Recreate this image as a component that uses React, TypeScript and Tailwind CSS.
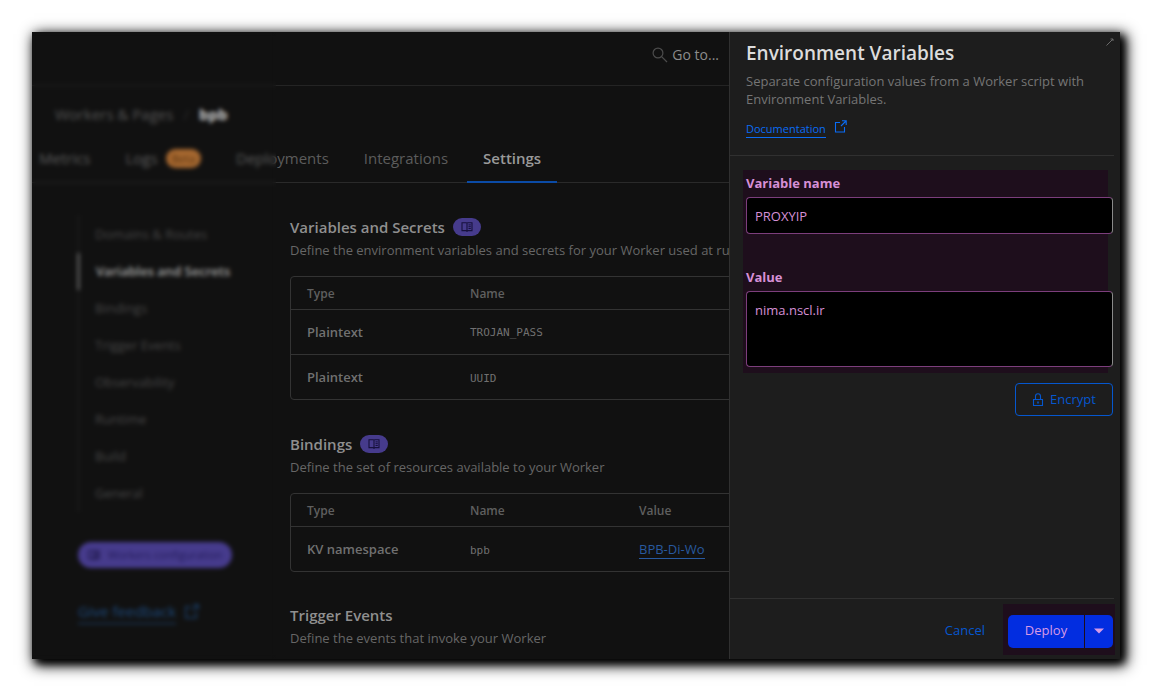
import React from "react";

const tabs = [
  { label: "Metrics" },
  { label: "Logs", badge: "Beta" },
  { label: "Deployments" },
  { label: "Integrations" },
  { label: "Settings", active: true },
];

const sections = [
  "Domains & Routes",
  "Variables and Secrets",
  "Bindings",
  "Trigger Events",
  "Observability",
  "Runtime",
  "Build",
  "General",
];

function SearchIcon() {
  return (
    <svg width="16" height="16" viewBox="0 0 16 16" fill="none" stroke="#4c4c4c" strokeWidth="1.2" aria-hidden="true">
      <circle cx="6" cy="6" r="4.9" />
      <path d="M9.6 9.6 15 15" />
    </svg>
  );
}

function ExternalIcon({ size = 13 }: { size?: number }) {
  return (
    <svg width={size} height={size} viewBox="0 0 13 13" fill="none" stroke="currentColor" strokeWidth="1.1" aria-hidden="true">
      <path d="M6 2.5H1.5V12H10.5V7" />
      <path d="M8 .8H12.2V5M12 1 7 6" />
    </svg>
  );
}

function LockIcon() {
  return (
    <svg width="12" height="14" viewBox="0 0 12 14" fill="none" stroke="currentColor" strokeWidth="1.1" aria-hidden="true">
      <path d="M1.5 6.5h9v6h-9zM3.5 6.5V3.2a2.5 2.5 0 0 1 5 0v3.3" />
      <path d="M6 8.5v2" strokeWidth="1.5" />
    </svg>
  );
}

function BookIcon() {
  return (
    <svg className="shrink-0" width="12" height="10" viewBox="0 0 12 10" fill="none" stroke="#17113d" strokeWidth="1.1" aria-hidden="true">
      <path d="M1 .8h4.2L6 1.3l.8-.5H11v7.8H6.8L6 9.4l-.8-.8H1zM6 1.3v8" />
      <path d="M7.5 2.9h2.3M7.5 4.7h2.3M7.5 6.5h2.3" strokeWidth="1" />
    </svg>
  );
}

function SectionHeading({ title, docs, text }: { title: string; docs?: boolean; text: string }) {
  return (
    <header>
      <div className="flex items-center gap-2">
        <h2 className="text-[15px] leading-6 font-semibold text-[#8f8f8f]">{title}</h2>
        {docs && (
          <a href="#docs" aria-label={`${title} documentation`} className="flex h-[18px] w-7 items-center justify-center rounded-full bg-[#463b8c]">
            <BookIcon />
          </a>
        )}
      </div>
      <p className="text-[13px] leading-[22px] text-[#666]">{text}</p>
    </header>
  );
}

function DataTable({ columns, rows }: { columns: string[]; rows: React.ReactNode[][] }) {
  return (
    <div className="mt-[15px] w-[700px] rounded border border-[#333]">
      <table className="w-full table-fixed border-collapse text-left text-[13px]">
        <colgroup>
          <col className="w-[163px]" />
          <col className="w-[169px]" />
          <col />
        </colgroup>
        <thead>
          <tr className="h-8 text-[#5f5f5f]">
            {columns.map((c) => (
              <th key={c} scope="col" className="pt-0.5 pl-4 text-xs font-semibold">
                {c}
              </th>
            ))}
          </tr>
        </thead>
        <tbody>
          {rows.map((r, i) => (
            <tr key={i} className="h-[45px] border-t border-[#333] text-[#707070]">
              {r.map((cell, j) =>
                j === 0 ? (
                  <th key={j} scope="row" className="pt-0.5 pl-4 font-semibold">
                    {cell}
                  </th>
                ) : (
                  <td key={j} className={j === 1 ? "pt-1 pl-4 font-['DejaVu_Sans_Mono',monospace] text-[11px]" : "pt-0.5 pl-4"}>
                    {cell}
                  </td>
                ),
              )}
            </tr>
          ))}
        </tbody>
      </table>
    </div>
  );
}

function Dashboard() {
  return (
    <div className="relative min-w-0 flex-1 overflow-hidden whitespace-nowrap">
      <div className="flex h-[54px] items-center justify-end border-b border-[#242424] pr-2.5 pb-2">
        <button className="flex items-center gap-1 text-sm text-[#8c8c8c]">
          <SearchIcon />
          Go to...
        </button>
      </div>

      <nav aria-label="Breadcrumb" className="flex h-[51px] items-center gap-2.5 pt-1.5 pl-[23px] text-[15px]">
        <a href="#workers" className="text-[#555]">Workers &amp; Pages</a>
        <span className="text-[#2a2a2a]">/</span>
        <strong className="font-bold text-[#d0d0d0]">bpb</strong>
      </nav>

      <nav aria-label="Worker" className="h-[46px] border-b border-[#2a2a2a]">
        <div className="-ml-[9px] flex h-full gap-[3px]">
          {tabs.map((t) => (
            <a
              key={t.label}
              href={`#${t.label.toLowerCase()}`}
              className={
                t.active
                  ? "flex h-[46px] items-center border-b-2 border-[#0b4ba6] px-4 pb-0.5 text-[15px] font-semibold text-[#9a9a9a]"
                  : "flex h-[46px] items-center gap-2 border-b-2 border-transparent px-4 pb-0.5 text-[15px] text-[#5c5c5c]"
              }
            >
              {t.label}
              {t.badge && <span className="rounded-full bg-[#a5672f] px-1.5 text-[11px] leading-[19px] text-[#5b3410]">{t.badge}</span>}
            </a>
          ))}
        </div>
      </nav>

      <div className="flex pt-8">
        <aside className="w-[258px] shrink-0 pl-[46px]">
          <ul className="border-l border-[#222] pt-px">
            {sections.map((s, i) => (
              <li key={s}>
                <a
                  href="#section"
                  className={
                    i === 1
                      ? "-ml-0.5 block border-l-3 border-[#555] pl-4 text-[13px] leading-[37px] font-semibold text-[#a8a8a8]"
                      : "block pl-4 text-[13px] leading-[37px] text-[#464646]"
                  }
                >
                  {s}
                </a>
              </li>
            ))}
          </ul>
          <a href="#configuration" className="mt-[30px] flex h-[26px] w-[154px] items-center gap-2 rounded-full bg-[#463b8c] px-2.5 text-[11px] text-[#251c5c]">
            <BookIcon />
            Workers configuration
          </a>
          <a href="#feedback" className="mt-8 flex items-center gap-2 text-[15px] text-[#1c4778]">
            <span className="border-b border-[#1c4778]">Give feedback</span>
            <ExternalIcon size={15} />
          </a>
        </aside>

        <main>
          <section>
            <SectionHeading title="Variables and Secrets" docs text="Define the environment variables and secrets for your Worker used at runtime" />
            <DataTable
              columns={["Type", "Name"]}
              rows={[
                ["Plaintext", "TROJAN_PASS"],
                ["Plaintext", "UUID"],
              ]}
            />
          </section>
          <section className="mt-8">
            <SectionHeading title="Bindings" docs text="Define the set of resources available to your Worker" />
            <DataTable
              columns={["Type", "Name", "Value"]}
              rows={[
                [
                  "KV namespace",
                  "bpb",
                  <a href="#kv" className="border-b border-[#28599f] text-[#28599f]">
                    BPB-Di-Wo
                  </a>,
                ],
              ]}
            />
          </section>
          <section className="mt-[31px]">
            <SectionHeading title="Trigger Events" text="Define the events that invoke your Worker" />
          </section>
        </main>
      </div>

      <div className="pointer-events-none absolute inset-y-0 left-0 w-[244px] backdrop-blur-[2px]" />
    </div>
  );
}

function VariableDrawer() {
  return (
    <aside className="relative flex w-[391px] shrink-0 flex-col border-l border-[#303030] bg-[#1d1d1d]">
      <svg className="absolute top-1.5 right-1.5" width="8" height="8" viewBox="0 0 8 8" fill="none" stroke="#6a6a6a" strokeWidth="1" aria-hidden="true">
        <path d="M.5 7.5 7 1M4.5 1H7V3" />
      </svg>

      <header className="mr-1.5 h-[124px] border-b border-[#303030] pt-2 pl-4">
        <h1 className="text-[19px] leading-[26px] font-semibold text-[#dcdcdc]">Environment Variables</h1>
        <p className="mt-1.5 text-[13px] leading-[18px] text-[#757575]">
          Separate configuration values from a Worker script with Environment Variables.
        </p>
        <a href="#documentation" className="mt-3 flex items-start gap-2 text-[11px] leading-[17px] text-[#0a6cf5]">
          <span className="border-b border-[#0a6cf5]">Documentation</span>
          <ExternalIcon />
        </a>
      </header>

      <form className="flex flex-1 flex-col">
        <div className="mt-3.5 mr-3 ml-[13px] bg-[#1e0e1c] pb-1.5 pl-[3px]">
          <label htmlFor="name" className="block pt-1 pb-1 text-[13px] leading-[19px] font-bold text-[#d690d6]">
            Variable name
          </label>
          <input
            id="name"
            defaultValue="PROXYIP"
            className="block h-[37px] w-[calc(100%+5px)] rounded border border-[#7c3e7c] border-r-[#8a8a8a] bg-black px-2 text-[13px] text-[#d690d6] outline-none"
          />
          <label htmlFor="value" className="mt-[30px] block pt-1 pb-1 text-[13px] leading-[19px] font-bold text-[#d690d6]">
            Value
          </label>
          <textarea
            id="value"
            defaultValue="nima.nscl.ir"
            className="block h-[76px] w-[calc(100%+5px)] resize-none rounded border border-[#7c3e7c] border-r-[#8a8a8a] bg-black px-2 py-2 text-[13px] leading-5 text-[#d690d6] outline-none"
          />
        </div>
        <button type="button" className="mt-2.5 mr-[7px] flex h-[33px] w-[98px] items-center justify-center gap-1.5 self-end rounded-sm border border-[#0557cf] text-[13px] text-[#0557cf]">
          <LockIcon />
          Encrypt
        </button>

        <footer className="mt-auto mr-1.5 flex h-[61px] items-center justify-end border-t border-[#303030]">
          <button type="button" className="mr-[18px] pt-1 text-[13px] text-[#0557cf]">Cancel</button>
          <div className="-mr-px flex bg-[#1e0e1c] pt-[11px] pr-0.5 pb-[7px] pl-[5px]">
            <button type="submit" className="h-[33px] w-[76px] rounded-l-[5px] bg-[#022de0] text-[13px] text-[#d79ae6]">
              Deploy
            </button>
            <button type="button" aria-label="More deploy options" className="ml-px flex h-[33px] w-7 items-center justify-center rounded-r-[5px] bg-[#022de0]">
              <svg width="10" height="6" viewBox="0 0 10 6" fill="#d79ae6" aria-hidden="true">
                <path d="M0 .5h10L5 5.5z" />
              </svg>
            </button>
          </div>
        </footer>
      </form>
    </aside>
  );
}

export default function App() {
  return (
    <div className="flex min-h-screen bg-white pt-8 pr-[34px] pb-[34px] pl-8 font-['Open_Sans','Noto_Sans',sans-serif]">
      <div className="flex min-w-0 flex-1 bg-[#111] shadow-[4px_4px_8px_0_#000,4px_4px_14px_2px_#000]">
        <Dashboard />
        <VariableDrawer />
      </div>
    </div>
  );
}
